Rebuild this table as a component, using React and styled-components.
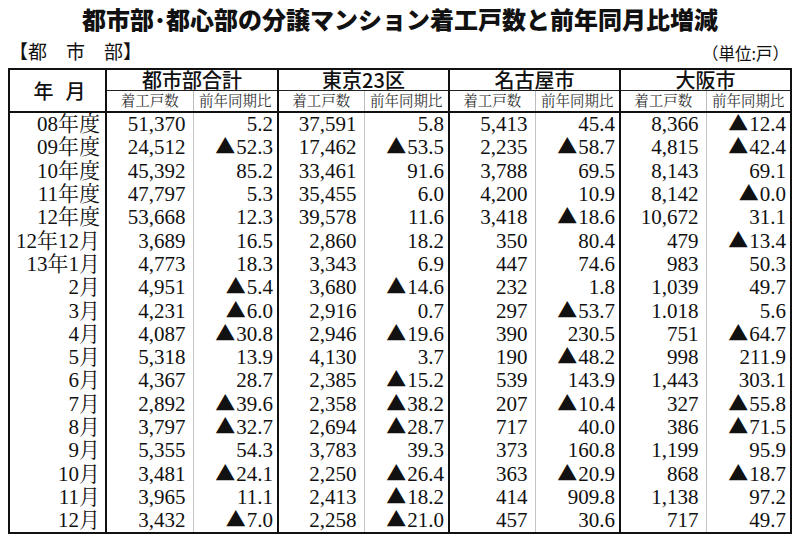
import React from "react";
import styled, { createGlobalStyle } from "styled-components";

const SERIF = `"Liberation Serif", "Noto Serif CJK JP", "Noto Sans CJK JP", serif`;
const SANS = `"Noto Sans CJK JP", "Noto Sans", sans-serif`;

const GlobalStyle = createGlobalStyle`
  html, body { margin: 0; padding: 0; background: #fff; }
  body { width: 800px; height: 548px; overflow: hidden; }
`;

const Page = styled.div`
  width: 800px;
  height: 548px;
  box-sizing: border-box;
  padding: 4px 8px 0 8px;
  display: flex;
  flex-direction: column;
  color: #111;
`;

const Title = styled.h1`
  margin: 0;
  height: 30px;
  line-height: 30px;
  text-align: center;
  font-family: ${SANS};
  font-size: 24px;
  font-weight: 900;
  letter-spacing: 0;
  white-space: nowrap;
`;

const SubHeader = styled.div`
  height: 34px;
  display: flex;
  align-items: center;
  justify-content: space-between;
`;

const Section = styled.span`
  font-family: ${SANS};
  font-size: 19px;
  line-height: 22px;
  margin-left: 1px;
`;

const Unit = styled.span`
  font-family: ${SANS};
  font-size: 16.5px;
  line-height: 22px;
  margin-right: 3px;
  margin-top: 3px;
`;

const Table = styled.table`
  border-collapse: collapse;
  table-layout: fixed;
  width: 784px;
  border: 2px solid #111;
`;

const YearHead = styled.th`
  font-family: ${SANS};
  font-weight: 500;
  font-size: 20px;
  letter-spacing: -4px;
  padding: 0;
  text-align: center;
  border-right: 2px solid #111;
  border-bottom: 2px solid #111;
`;

const GroupHead = styled.th`
  font-family: ${SANS};
  font-weight: 500;
  font-size: 20px;
  height: 20px;
  line-height: 20px;
  padding: 0;
  text-align: center;
  border-left: 2px solid #111;
  border-bottom: 1px solid #222;
`;

const SubHead = styled.th`
  font-family: ${SERIF};
  font-weight: 400;
  font-size: 14.5px;
  color: #333;
  height: 20px;
  line-height: 20px;
  padding: 0;
  text-align: center;
  border-bottom: 2px solid #111;
  border-left: ${(p) => (p.$first ? "2px solid #111" : "1px solid #bdbdbd")};
`;

const YearCell = styled.td`
  font-family: ${SERIF};
  font-size: 21px;
  height: 23.3px;
  line-height: 23px;
  padding: 0 5px 0 0;
  text-align: right;
  white-space: nowrap;
  border-right: 2px solid #111;
`;

const NumCell = styled.td`
  font-family: ${SERIF};
  font-size: 21px;
  height: 23.3px;
  line-height: 23px;
  padding: 0 ${(p) => (p.$first ? "7px" : "4px")} 0 0;
  text-align: right;
  white-space: nowrap;
  border-left: ${(p) => (p.$first ? "2px solid #111" : "1px solid #c4c4c4")};
`;

const Tri = styled.span`
  font-family: ${SANS};
  font-size: 20px;
  line-height: 0;
  margin-right: 1px;
`;

const groups = ["都市部合計", "東京23区", "名古屋市", "大阪市"];

const rows = [
  ["08年度", "51,370", "5.2", "37,591", "5.8", "5,413", "45.4", "8,366", "▲12.4"],
  ["09年度", "24,512", "▲52.3", "17,462", "▲53.5", "2,235", "▲58.7", "4,815", "▲42.4"],
  ["10年度", "45,392", "85.2", "33,461", "91.6", "3,788", "69.5", "8,143", "69.1"],
  ["11年度", "47,797", "5.3", "35,455", "6.0", "4,200", "10.9", "8,142", "▲0.0"],
  ["12年度", "53,668", "12.3", "39,578", "11.6", "3,418", "▲18.6", "10,672", "31.1"],
  ["12年12月", "3,689", "16.5", "2,860", "18.2", "350", "80.4", "479", "▲13.4"],
  ["13年1月", "4,773", "18.3", "3,343", "6.9", "447", "74.6", "983", "50.3"],
  ["2月", "4,951", "▲5.4", "3,680", "▲14.6", "232", "1.8", "1,039", "49.7"],
  ["3月", "4,231", "▲6.0", "2,916", "0.7", "297", "▲53.7", "1.018", "5.6"],
  ["4月", "4,087", "▲30.8", "2,946", "▲19.6", "390", "230.5", "751", "▲64.7"],
  ["5月", "5,318", "13.9", "4,130", "3.7", "190", "▲48.2", "998", "211.9"],
  ["6月", "4,367", "28.7", "2,385", "▲15.2", "539", "143.9", "1,443", "303.1"],
  ["7月", "2,892", "▲39.6", "2,358", "▲38.2", "207", "▲10.4", "327", "▲55.8"],
  ["8月", "3,797", "▲32.7", "2,694", "▲28.7", "717", "40.0", "386", "▲71.5"],
  ["9月", "5,355", "54.3", "3,783", "39.3", "373", "160.8", "1,199", "95.9"],
  ["10月", "3,481", "▲24.1", "2,250", "▲26.4", "363", "▲20.9", "868", "▲18.7"],
  ["11月", "3,965", "11.1", "2,413", "▲18.2", "414", "909.8", "1,138", "97.2"],
  ["12月", "3,432", "▲7.0", "2,258", "▲21.0", "457", "30.6", "717", "49.7"],
];

const colWidths = [97, 87, 85, 86, 85, 86, 85, 86, 85];

function Value({ v }) {
  if (v.startsWith("▲")) {
    return (
      <>
        <Tri>▲</Tri>
        {v.slice(1)}
      </>
    );
  }
  return v;
}

export default function App() {
  return (
    <>
      <GlobalStyle />
      <Page>
        <Title>都市部･都心部の分譲マンション着工戸数と前年同月比増減</Title>
        <SubHeader>
          <Section>【都　市　部】</Section>
          <Unit>（単位:戸）</Unit>
        </SubHeader>
        <Table>
          <colgroup>
            {colWidths.map((w, i) => (
              <col key={i} style={{ width: w }} />
            ))}
          </colgroup>
          <thead>
            <tr>
              <YearHead rowSpan={2}>年　月</YearHead>
              {groups.map((g) => (
                <GroupHead key={g} colSpan={2}>
                  {g}
                </GroupHead>
              ))}
            </tr>
            <tr>
              {groups.map((g) => (
                <React.Fragment key={g}>
                  <SubHead $first>着工戸数</SubHead>
                  <SubHead>前年同期比</SubHead>
                </React.Fragment>
              ))}
            </tr>
          </thead>
          <tbody>
            {rows.map((r) => (
              <tr key={r[0]}>
                <YearCell>{r[0]}</YearCell>
                {r.slice(1).map((v, i) => (
                  <NumCell key={i} $first={i % 2 === 0}>
                    <Value v={v} />
                  </NumCell>
                ))}
              </tr>
            ))}
          </tbody>
        </Table>
      </Page>
    </>
  );
}
